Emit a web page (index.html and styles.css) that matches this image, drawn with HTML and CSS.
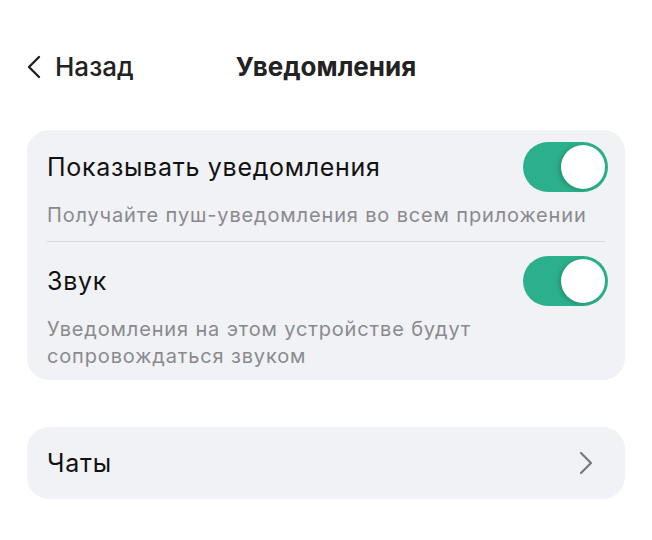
FILE: index.html
```html
<!DOCTYPE html>
<html lang="ru">
<head>
    <meta charset="UTF-8">
    <meta name="viewport" content="width=device-width, initial-scale=1.0">
    <title>Уведомления</title>
    <link rel="stylesheet" href="styles.css">
</head>
<body>
    <header class="nav">
        <a class="back" href="#">
            <svg class="back-icon" width="14" height="24" viewBox="0 0 14 24">
                <path d="M12 2 L2 12 L12 22" fill="none" stroke="#222" stroke-width="2.4" stroke-linecap="round" stroke-linejoin="round"/>
            </svg>
            <span>Назад</span>
        </a>
        <h1 class="nav-title">Уведомления</h1>
    </header>

    <section class="card">
        <div class="row">
            <div class="row-head">
                <span class="row-title">Показывать уведомления</span>
                <span class="toggle"><span class="knob"></span></span>
            </div>
            <p class="row-desc">Получайте пуш-уведомления во всем приложении</p>
        </div>
        <div class="divider"></div>
        <div class="row">
            <div class="row-head">
                <span class="row-title">Звук</span>
                <span class="toggle"><span class="knob"></span></span>
            </div>
            <p class="row-desc">Уведомления на этом устройстве будут<br>сопровождаться звуком</p>
        </div>
    </section>

    <section class="card link-card">
        <span class="row-title">Чаты</span>
        <svg class="chevron" width="14" height="24" viewBox="0 0 14 24">
            <path d="M2 2 L12 12 L2 22" fill="none" stroke="#77777c" stroke-width="2.2" stroke-linecap="round" stroke-linejoin="round"/>
        </svg>
    </section>
</body>
</html>
```

FILE: styles.css
```css
body {
    margin: 0;
    background: #fff;
    font-family: Inter, "Noto Sans", sans-serif;
    color: #111;
    padding: 0 27px;
}
.nav {
    position: relative;
    display: flex;
    align-items: center;
    padding-top: 3px;
    box-sizing: border-box;
    height: 130px;
}
.back {
    display: flex;
    align-items: center;
    gap: 14px;
    color: #222;
    text-decoration: none;
    font-size: 26px;
    font-weight: 500;
}
.nav-title {
    position: absolute;
    left: 0;
    right: 0;
    margin: 0;
    text-align: center;
    font-size: 26px;
    font-weight: 700;
    color: #222;
    pointer-events: none;
}
.card {
    background: #f1f2f6;
    border-radius: 22px;
    padding: 0 20px;
}
.row {
    padding: 12px 0 12px;
}
.row + .divider + .row {
    padding-top: 14px;
    padding-bottom: 10px;
}
.row-head {
    display: flex;
    justify-content: space-between;
    align-items: center;
}
.row-title {
    font-size: 25px;
    letter-spacing: 0.7px;
}
.toggle {
    width: 85px;
    height: 50px;
    border-radius: 25px;
    background: #2bb08b;
    position: relative;
    margin-right: -3px;
}
.knob {
    position: absolute;
    right: 3px;
    top: 3px;
    width: 44px;
    height: 44px;
    border-radius: 50%;
    background: #fff;
    box-shadow: -2px 1px 4px rgba(0, 0, 0, 0.2);
}
.row-desc {
    margin: 10px 0 0;
    font-size: 20px;
    letter-spacing: 0.85px;
    line-height: 27px;
    color: #8a8a8e;
}
.divider {
    height: 1px;
    background: #d9d9de;
}
.link-card {
    margin-top: 47px;
    height: 72px;
    display: flex;
    align-items: center;
    justify-content: space-between;
    padding-right: 32px;
}
```
